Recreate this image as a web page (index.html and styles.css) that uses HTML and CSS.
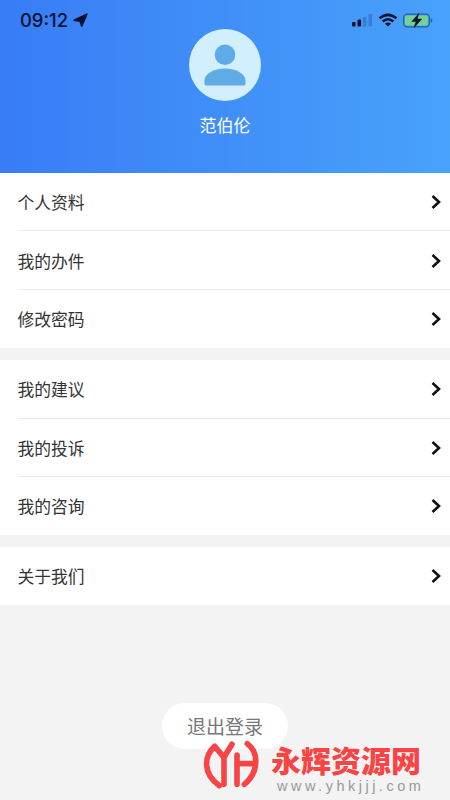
FILE: index.html
```html
<!DOCTYPE html>
<html lang="zh-CN">
<head>
<meta charset="utf-8">
<title>个人中心</title>
<link rel="stylesheet" href="styles.css">
</head>
<body>
<header class="hero">
  <div class="status">
    <span class="time">09:12</span>
    <svg class="loc" viewBox="0 0 15 15"><path d="M13.800 1.200 8.700 13 7.200 8.200 1.200 7.200Z" fill="#071331" stroke="#071331" stroke-width="1.800" stroke-linejoin="round"/></svg>
    <svg class="indicators" viewBox="0 0 84 18">
      <g fill="#071331"><rect x="2" y="12" width="3.600" height="4.500" rx="1"/><rect x="7.500" y="9.500" width="3.600" height="7" rx="1"/></g>
      <g fill="#2d70bd" opacity=".65"><rect x="13" y="7" width="3.600" height="9.500" rx="1"/><rect x="18.500" y="4" width="3.600" height="12.500" rx="1"/></g>
      <g fill="none" stroke="#071331" stroke-width="2.600"><path d="M29.500 8.300Q38 1.300 46.500 8.300M32.700 11.500Q38 7 43.300 11.500"/></g>
      <path d="M35 13.700Q38 11.300 41 13.700L38 16.500Z" fill="#071331"/>
      <rect x="53.600" y="4.100" width="25.800" height="12.800" rx="3.600" fill="none" stroke="#1f6399" stroke-width="1.200"/>
      <rect x="55" y="5.500" width="23" height="10" rx="2" fill="#78cf94"/>
      <path d="M80.800 8Q84 10.500 80.800 13Z" fill="#1f6399"/>
      <path d="M69 3.300 61.800 11.500H66L64 17.700 71.700 9H67.200Z" fill="#071331" stroke="#071331" stroke-width=".5"/>
    </svg>
  </div>
  <svg class="avatar" viewBox="0 0 72 72"><circle cx="36" cy="36" r="36" fill="#d2effd"/><circle cx="36" cy="25.800" r="10.300" fill="#5fabe8"/><path d="M15.500 55V51.500C15.500 44 26.500 39.500 36 39.500S56.500 44 56.500 51.500V55Q56.500 56.500 55 56.500H17Q15.500 56.500 15.500 55Z" fill="#5fabe8"/></svg>
  <div class="name">范伯伦</div>
</header>
<main>
  <ul class="group">
    <li><span>个人资料</span><svg class="chev" viewBox="0 0 10 14"><path d="M1.500 1 8 7 1.500 13"/></svg></li>
    <li><span>我的办件</span><svg class="chev" viewBox="0 0 10 14"><path d="M1.500 1 8 7 1.500 13"/></svg></li>
    <li><span>修改密码</span><svg class="chev" viewBox="0 0 10 14"><path d="M1.500 1 8 7 1.500 13"/></svg></li>
  </ul>
  <ul class="group">
    <li><span>我的建议</span><svg class="chev" viewBox="0 0 10 14"><path d="M1.500 1 8 7 1.500 13"/></svg></li>
    <li><span>我的投诉</span><svg class="chev" viewBox="0 0 10 14"><path d="M1.500 1 8 7 1.500 13"/></svg></li>
    <li><span>我的咨询</span><svg class="chev" viewBox="0 0 10 14"><path d="M1.500 1 8 7 1.500 13"/></svg></li>
  </ul>
  <ul class="group">
    <li><span>关于我们</span><svg class="chev" viewBox="0 0 10 14"><path d="M1.500 1 8 7 1.500 13"/></svg></li>
  </ul>
  <button class="logout">退出登录</button>
</main>
<div class="mark">
  <svg class="logo" viewBox="160 148 174 156"><path class="halo" d="M209 288C159 252 162 200 195 170L223 203 247 164M223 203V284M262 196V284M262 222H318M293 162C328 188 328 248 284 284"/><path class="ink" d="M209 288C159 252 162 200 195 170L223 203 247 164M223 203V284M262 196V284M262 222H318M293 162C328 188 328 248 284 284"/></svg>
  <div class="words"><div class="brand">永辉资源网</div><div class="url">www.yhkjjj.com</div></div>
</div>
</body>
</html>
```
FILE: styles.css
```css
* { box-sizing: border-box; }
body { margin: 0; width: 450px; height: 800px; overflow: hidden; position: relative; background: #f3f3f3; font-family: "Liberation Sans", "Noto Sans CJK SC", sans-serif; }
.hero { height: 173px; background: linear-gradient(90deg, #387cf6, #48a2fa); display: flex; flex-direction: column; align-items: center; }
.status { width: 100%; height: 28px; padding: 10px 16px 0 20px; display: flex; align-items: flex-start; }
.time { font: 500 18.400px/21px Inter, sans-serif; color: #071331; width: 49px; white-space: nowrap; }
.loc { width: 15px; height: 15px; margin: 3px 0 0 4px; }
.indicators { width: 84px; height: 18px; margin-left: auto; }
.avatar { width: 72px; height: 72px; margin-top: 1px; flex: none; }
.name { margin-top: 13px; font-size: 17px; line-height: 25px; color: #fff; }
.group { list-style: none; margin: 0 0 12px; padding: 0 0 0 17.500px; background: #fff; }
.group li { height: 58.400px; display: flex; align-items: center; justify-content: space-between; padding: 1px 9px 0 0; border-bottom: 1px solid #e8e8e8; font-size: 16.800px; color: #333; }
.group li:last-child { border-bottom-color: transparent; }
.group:nth-of-type(3) li { height: 57.600px; }
.chev { width: 10px; height: 14px; fill: none; stroke: #111; stroke-width: 2.600; }
.logout { display: block; width: 126px; height: 46px; margin: 98px auto 0 162px; border: 0; border-radius: 23px; background: #fff; color: #777; font: 19px "Noto Sans CJK SC", sans-serif; padding: 0; }
.mark { position: absolute; left: 203px; top: 739px; display: flex; }
.logo { width: 58px; height: 52px; fill: none; stroke-linecap: round; stroke-linejoin: round; }
.halo { stroke: #fff; stroke-width: 25; opacity: .7; }
.ink { stroke: #f84444; stroke-width: 17; }
.words { padding: 2px 0 0 10px; white-space: nowrap; }
.brand { font: 900 30px/36px "Noto Sans CJK SC", sans-serif; color: #f84444; text-shadow: 0 0 2px #fff; }
.url { margin: 1px 0 0 6px; font: 14.500px/16px "Liberation Sans", sans-serif; letter-spacing: 3.500px; color: #999; }
```
